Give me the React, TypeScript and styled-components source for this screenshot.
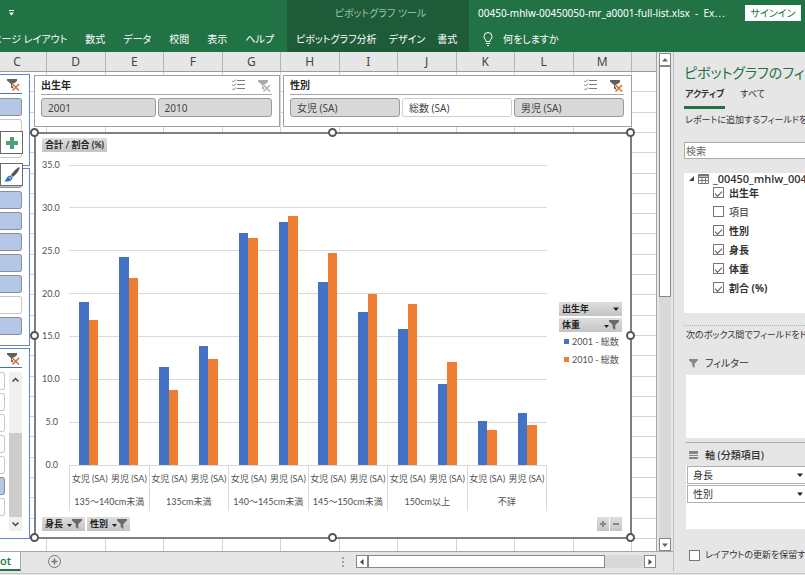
import React from "react";
import styled, { createGlobalStyle, css } from "styled-components";

const ui = `"Noto Sans", "Noto Sans CJK JP", sans-serif`;
const chartFont = `Lato, "Noto Sans CJK JP", sans-serif`;
const green = "#217346";

const GlobalStyle = createGlobalStyle`
  *, *::before, *::after { box-sizing: border-box; }
  body { margin: 0; background: #e6e6e6; }
  button, input { font: inherit; color: inherit; margin: 0; }
  button { padding: 0; background: none; border: 0; cursor: pointer; white-space: nowrap; }
  ul { list-style: none; margin: 0; padding: 0; }
  svg { display: block; flex: none; }
`;

const Window = styled.div`
  display: flex;
  flex-direction: column;
  height: 100vh;
  min-height: 560px;
  overflow: hidden;
  background: #e6e6e6;
  color: #262626;
  font: 10px/14px ${ui};
  font-feature-settings: "palt";
`;

/* Ribbon */
const Ribbon = styled.header`
  display: grid;
  grid-template-columns: 287px 182px minmax(0, 1fr);
  height: 52px;
  flex: none;
  background: ${green};
  color: #fff;
`;
const RibbonSection = styled.div<{ $dark?: boolean }>`
  display: grid;
  grid-template-rows: 26px 26px;
  min-width: 0;
  background: ${(p) => (p.$dark ? "#1e5c39" : green)};
`;
const TitleRow = styled.div<{ $center?: boolean }>`
  display: flex;
  align-items: center;
  justify-content: ${(p) => (p.$center ? "center" : "space-between")};
  padding: 0 4px 0 9px;
  color: ${(p) => (p.$center ? "#9fc2ae" : "#fff")};
  white-space: nowrap;
`;
const Tabs = styled.nav<{ $end?: boolean }>`
  display: flex;
  align-items: center;
  justify-content: ${(p) => (p.$end ? "flex-end" : "flex-start")};
  gap: ${(p) => (p.$end ? "18px" : "12px")};
  padding: 0 ${(p) => (p.$end ? "13px" : "8px")} 0 9px;
  overflow: hidden;
`;
const RibbonTab = styled.button`
  flex: none;
  line-height: 14px;
`;
const TellMe = styled.button`
  display: flex;
  align-items: center;
  gap: 10px;
  padding-left: 5px;
`;
const SignIn = styled.button`
  width: 56px;
  height: 16px;
  flex: none;
  background: #fff;
  color: ${green};
  line-height: 14px;
`;

/* Workbook */
const Body = styled.div`
  display: flex;
  flex: 1;
  min-height: 0;
`;
const Workbook = styled.main`
  display: flex;
  flex-direction: column;
  flex: 1;
  min-width: 0;
`;
const SheetRow = styled.div`
  display: flex;
  flex: 1;
  min-height: 0;
`;
const Sheet = styled.div`
  display: grid;
  grid-template-rows: 20px minmax(0, 1fr);
  flex: 1;
  min-width: 0;
  border-right: 1px solid #a6a6a6;
`;
const columns = css`
  display: grid;
  grid-template-columns: 47px repeat(10, minmax(0, 1fr)) 24px;
`;
const ColumnHeads = styled.div`
  ${columns}
  border-bottom: 1px solid #9c9c9c;
  background: #e6e6e6;
`;
const ColumnHead = styled.div<{ $cut?: boolean }>`
  padding-right: ${(p) => (p.$cut ? "12px" : "0")};
  border-right: 1px solid #b4b4b4;
  font-size: 12px;
  line-height: 19px;
  text-align: center;
  color: #444;
  &:last-child { border-right: 0; }
`;
const Cells = styled.div`
  display: grid;
  min-height: 0;
  background: #fff;
  > * { grid-area: 1 / 1; min-height: 0; min-width: 0; }
`;
const ColumnLines = styled.div`
  ${columns}
  > i { border-right: 1px solid #d4d4d4; }
  > i:last-child { border-right: 0; }
`;
const RowLines = styled.div`
  display: grid;
  grid-template-rows: repeat(23, minmax(0, 1fr)) 12px;
  > i { border-bottom: 1px solid #d4d4d4; }
  > i:last-child { border-bottom: 0; }
`;
const Objects = styled.div`
  display: flex;
  gap: 4px;
  padding: 2px 24px 12px 0;
`;

/* Slicers */
const SideSlicers = styled.div`
  display: flex;
  flex-direction: column;
  gap: 2px;
  width: 30px;
  flex: none;
`;
const SideSlicer = styled.section<{ $grow?: boolean; $height?: number }>`
  position: relative;
  display: flex;
  flex-direction: column;
  ${(p) => (p.$grow ? "flex: 1; min-height: 0;" : `flex: 0 0 ${p.$height}px;`)}
  padding-right: 7px;
  border: solid #5b86d0;
  border-width: 1px 1px 1px 0;
  background: #fff;
`;
const SideHead = styled.div`
  display: flex;
  justify-content: flex-end;
  align-items: center;
  height: 19px;
  flex: none;
  padding-right: 2px;
  border-bottom: 1px solid #4472c4;
`;
const SideItems = styled.div<{ $top: number }>`
  display: flex;
  flex-direction: column;
  gap: 3px;
  flex: 1;
  min-height: 0;
  padding-top: ${(p) => p.$top}px;
  overflow: hidden;
`;
const SideItem = styled.button<{ $on?: boolean }>`
  height: 18px;
  flex: none;
  border: 1px solid ${(p) => (p.$on ? "#8a8f9c" : "#c8c8c8")};
  border-left: 0;
  border-radius: 0 3px 3px 0;
  background: ${(p) => (p.$on ? "#b4c7e7" : "#fff")};
`;
const SideScroll = styled.div`
  display: flex;
  gap: 4px;
  flex: 1;
  min-height: 0;
  padding-bottom: 7px;
`;
const SideTrack = styled.div`
  display: flex;
  flex-direction: column;
  justify-content: space-between;
  width: 13px;
  flex: none;
  margin-top: 4px;
  background: #f0f0f0;
`;
const SideArrow = styled.button`
  display: grid;
  place-items: center;
  height: 14px;
`;
const SideThumb = styled.div`
  height: 84px;
  margin-top: auto;
  background: #cdcdcd;
`;
const FloatButton = styled.button<{ $top: number }>`
  position: absolute;
  left: 0;
  top: ${(p) => p.$top}px;
  display: grid;
  place-items: center;
  width: 23px;
  height: 23px;
  border: 1px solid #6b6b6b;
  background: #fff;
  z-index: 1;
`;
const Center = styled.div`
  display: flex;
  flex-direction: column;
  flex: 1;
  min-width: 0;
  gap: 5px;
  padding-top: 1px;
`;
const SlicerRow = styled.div`
  display: grid;
  grid-template-columns: minmax(0, 246fr) minmax(0, 349fr);
  gap: 3px;
`;
const Slicer = styled.section`
  height: 52px;
  padding: 0 7px 0 6px;
  border: 1px solid #a0a0a0;
  background: #fff;
`;
const SlicerHead = styled.div`
  display: flex;
  align-items: center;
  gap: 13px;
  height: 19px;
  padding-right: 1px;
  border-bottom: 1px solid #a6a6a6;
`;
const SlicerTitle = styled.h2`
  flex: 1;
  margin: 0;
  font-size: 10px;
  line-height: 14px;
  font-weight: 700;
`;
const SlicerItems = styled.div`
  display: grid;
  grid-auto-flow: column;
  grid-auto-columns: minmax(0, 1fr);
  gap: 2px;
  padding-top: 3px;
`;
const SlicerItem = styled.button<{ $off?: boolean }>`
  height: 19px;
  padding: 0 6px;
  border: 1px solid ${(p) => (p.$off ? "#d0d0d0" : "#9b9b9b")};
  border-radius: 3px;
  background: ${(p) => (p.$off ? "#fff" : "#d9d9d9")};
  color: #444;
  line-height: 14px;
  text-align: left;
`;

/* Chart */
const Chart = styled.section`
  position: relative;
  display: flex;
  flex-direction: column;
  flex: 1;
  min-height: 0;
  padding: 4px 8px 6px 6px;
  border: 2px solid #7f7f7f;
  background: #fff;
  font: 9px/12px ${chartFont};
  color: #505050;
`;
const HandleFrame = styled.div`
  position: absolute;
  inset: -1px;
  pointer-events: none;
`;
const Handle = styled.i<{ $x: number; $y: number }>`
  position: absolute;
  left: ${(p) => p.$x}%;
  top: ${(p) => p.$y}%;
  width: 9px;
  height: 9px;
  margin: -5px;
  border: 2px solid #555;
  border-radius: 50%;
  background: #fff;
`;
const FieldButton = styled.button<{ $spread?: boolean }>`
  display: flex;
  align-items: center;
  justify-content: ${(p) => (p.$spread ? "space-between" : "flex-start")};
  gap: 4px;
  height: 14px;
  padding: 0 3px;
  background: linear-gradient(#dedede, #c4c4c4);
  color: #222;
  font-weight: 700;
  line-height: 12px;
`;
const ChartRow = styled.div<{ $bottom?: boolean }>`
  display: flex;
  gap: 2px;
  flex: none;
  padding-top: ${(p) => (p.$bottom ? "6px" : "0")};
`;
const Zoomers = styled.div`
  display: flex;
  gap: 1px;
  margin-left: auto;
`;
const ZoomButton = styled.button`
  display: grid;
  place-items: center;
  width: 12px;
  height: 14px;
  background: linear-gradient(#dedede, #c4c4c4);
`;
const ChartBody = styled.div`
  display: grid;
  grid-template-columns: 27px minmax(0, 1fr) 75px;
  grid-template-rows: minmax(0, 1fr) 46px;
  flex: 1;
  min-height: 0;
  padding-top: 13px;
`;
const AxisValues = styled.div`
  display: flex;
  flex-direction: column;
  justify-content: space-between;
  margin: -6px 0;
  padding-right: 11px;
  text-align: right;
  white-space: nowrap;
`;
const Plot = styled.svg`
  width: 100%;
  height: 100%;
  overflow: visible;
`;
const Legend = styled.aside`
  display: flex;
  flex-direction: column;
  gap: 2px;
  justify-content: center;
  padding: 39px 0 0 12px;
`;
const LegendItem = styled.div<{ $color: string }>`
  display: flex;
  align-items: center;
  gap: 3px;
  height: 16px;
  padding-left: 5px;
  white-space: nowrap;
  &::before { content: ""; width: 5px; height: 5px; background: ${(p) => p.$color}; }
`;
const Categories = styled.div`
  grid-column: 2;
  display: grid;
  grid-template-columns: repeat(6, minmax(0, 1fr));
  border-left: 1px solid #d9d9d9;
`;
const Category = styled.div`
  display: grid;
  grid-template-columns: 1fr 1fr;
  grid-template-rows: 27px 19px;
  border-right: 1px solid #d9d9d9;
  text-align: center;
  white-space: nowrap;
  > span { display: flex; align-items: center; justify-content: center; min-width: 0; }
  > span:last-child { grid-column: 1 / 3; }
`;

/* Scroll bars and sheet tabs */
const VScroll = styled.div`
  display: flex;
  flex-direction: column;
  width: 16px;
  flex: none;
  padding: 1px 2px 0;
`;
const Track = styled.div<{ $row?: boolean }>`
  display: flex;
  flex-direction: ${(p) => (p.$row ? "row" : "column")};
  flex: 1;
  min-height: 0;
  min-width: 0;
  background: #d9d9d9;
`;
const Arrow = styled.button`
  display: grid;
  place-items: center;
  width: 12px;
  height: 13px;
  flex: none;
  border: 1px solid #888;
  background: #fff;
`;
const Thumb = styled.div<{ $size: number }>`
  flex: 0 0 ${(p) => p.$size}%;
  border: 1px solid #888;
  background: #fff;
`;
const BottomBar = styled.div`
  display: flex;
  align-items: center;
  height: 20px;
  flex: none;
  padding-right: 17px;
  border-top: 1px solid #a6a6a6;
`;
const SheetTab = styled.button`
  align-self: stretch;
  width: 21px;
  border-bottom: 2px solid ${green};
  border-right: 1px solid #a6a6a6;
  background: #fff;
  color: ${green};
  font: 600 11px/16px "Open Sans", sans-serif;
  text-align: left;
`;
const AddSheet = styled.button`
  margin-left: 27px;
`;
const HScroll = styled.div`
  display: flex;
  width: 300px;
  margin-left: 12px;
`;
const Dots = styled.span`
  display: flex;
  flex-direction: column;
  gap: 2px;
  margin-left: auto;
  > i { width: 2px; height: 2px; background: #a0a0a0; }
`;
const StatusEdge = styled.footer`
  height: 4px;
  flex: none;
  background: linear-gradient(#e6e6e6 2px, #c6c6c6 2px, #c6c6c6 3px, #e6e6e6 3px);
`;

/* Field list pane */
const Pane = styled.aside`
  display: flex;
  flex-direction: column;
  width: 132px;
  flex: none;
  padding-left: 10px;
  border-left: 1px solid #bdbdbd;
  overflow: hidden;
  white-space: nowrap;
  color: #333;
`;
const PaneTitle = styled.h1`
  margin: 10px 0 0;
  font-size: 14px;
  line-height: 22px;
  font-weight: 400;
  color: ${green};
`;
const PaneTabs = styled.div`
  display: flex;
  gap: 14px;
`;
const PaneTab = styled.button<{ $on?: boolean }>`
  height: 25px;
  padding: 0 1px 3px;
  border-bottom: 3px solid ${(p) => (p.$on ? green : "transparent")};
  font-size: 9px;
  font-weight: ${(p) => (p.$on ? 700 : 400)};
  line-height: 14px;
`;
const PaneText = styled.p<{ $dotted?: boolean }>`
  margin: ${(p) => (p.$dotted ? "12px 0 0" : "4px 0 0")};
  padding: ${(p) => (p.$dotted ? "2px 0 0 2px" : "0 0 0 1px")};
  border-top: ${(p) => (p.$dotted ? "1px dotted #b0b0b0" : "0")};
  font-size: 9px;
  line-height: 14px;
`;
const Search = styled.input`
  height: 17px;
  flex: none;
  margin-top: 15px;
  padding: 0 1px;
  border: 1px solid #ababab;
  border-right: 0;
  border-radius: 0;
  background: #fff;
  &::placeholder { color: #666; opacity: 1; }
`;
const FieldList = styled.div`
  height: 140px;
  flex: none;
  margin-top: 14px;
  background: #fff;
`;
const TableName = styled.div`
  display: flex;
  align-items: center;
  gap: 4px;
  height: 10px;
  padding: 1px 0 0 5px;
  font: 600 11px/10px "Open Sans", sans-serif;
`;
const Check = styled.label<{ $bold?: boolean; $footer?: boolean }>`
  display: flex;
  align-items: center;
  gap: 5px;
  height: ${(p) => (p.$footer ? "16px" : "19px")};
  padding-left: ${(p) => (p.$footer ? "5px" : "29px")};
  margin-top: ${(p) => (p.$footer ? "18px" : "0")};
  font-size: ${(p) => (p.$footer ? "9px" : "10px")};
  font-weight: ${(p) => (p.$bold ? 700 : 400)};
`;
const Box = styled.input`
  appearance: none;
  display: grid;
  place-items: center;
  width: 11px;
  height: 11px;
  flex: none;
  border: 1px solid #777;
  background: #fff;
  &:checked::after {
    content: "";
    width: 7px;
    height: 4px;
    border: solid #555;
    border-width: 0 0 1px 1px;
    transform: rotate(-45deg);
  }
`;
const AreaHead = styled.h3<{ $line?: boolean }>`
  display: flex;
  align-items: center;
  gap: 7px;
  height: 24px;
  flex: none;
  margin: ${(p) => (p.$line ? "4px 0 0 2px" : "9px 0 0 2px")};
  padding-left: 3px;
  border-top: ${(p) => (p.$line ? "1px solid #ababab" : "0")};
  font-size: 10px;
  line-height: 14px;
  font-weight: ${(p) => (p.$line ? 500 : 400)};
`;
const DropArea = styled.div`
  display: flex;
  flex-direction: column;
  gap: 1px;
  height: 63px;
  flex: none;
  margin-left: 2px;
  padding-left: 1px;
  background: #fff;
`;
const AreaField = styled.button`
  display: flex;
  align-items: center;
  justify-content: space-between;
  height: 18px;
  padding: 0 2px 0 5px;
  border: solid #b0b0b0;
  border-width: 1px 0 1px 1px;
  line-height: 14px;
`;

const FunnelClear = ({ muted }: { muted?: boolean }) => (
  <svg width="13" height="13" viewBox="0 0 13 13" aria-hidden="true">
    <path d="M0 1h10v2L6.5 6v5.5L4 9.5V6L0 2.500z" fill={muted ? "#ababab" : "#5f5f5f"} />
    <path d="M5.500 6l6.500 6.500M12 6l-6.500 6.500" stroke="#fff" strokeWidth="3" />
    <path d="M5.500 6l6.500 6.500M12 6l-6.500 6.500" stroke={muted ? "#b5b5b5" : "#e0692a"} strokeWidth="1.500" />
  </svg>
);
const Checklist = () => (
  <svg width="13" height="12" viewBox="0 0 13 12" fill="none" stroke="#7d7d7d" aria-hidden="true">
    <path d="M5 1.500h8M5 5.500h8M5 9.500h8M0 1.500l1.500 1.500L4 .5M0 5.500L1.500 7 4 4.500M0 9.500L1.500 11 4 8.500" />
  </svg>
);
const Funnel = ({ size = 10, color = "#6a6a6a" }: { size?: number; color?: string }) => (
  <svg width={size} height={size} viewBox="0 0 10 10" aria-hidden="true">
    <path d="M0 0h10v1.500L6.300 5v5L3.700 8V5L0 1.500z" fill={color} />
  </svg>
);
const Triangle = ({ d = "down", color = "#222" }: { d?: "up" | "down" | "left" | "right"; color?: string }) => {
  const paths = { down: "M0 1.500h6L3 5z", up: "M0 4.500h6L3 1z", left: "M4.500 0v6L1 3z", right: "M1.500 0v6L5 3z" };
  return (
    <svg width="6" height="6" viewBox="0 0 6 6" aria-hidden="true">
      <path d={paths[d]} fill={color} />
    </svg>
  );
};
const FilterMark = () => (
  <svg width="15" height="10" viewBox="0 0 15 10" aria-hidden="true">
    <path d="M0 5h5L2.500 8z" fill="#222" />
    <path d="M5 0h10v1.500L11.300 5v5L8.700 8V5L5 1.500z" fill="#6a6a6a" />
  </svg>
);
const Chevron = ({ up }: { up?: boolean }) => (
  <svg width="7" height="5" viewBox="0 0 7 5" fill="none" stroke="#444" strokeWidth="1.500" aria-hidden="true">
    <path d={up ? "M.5 4.500l3-3 3 3" : "M.5.5l3 3 3-3"} />
  </svg>
);

const data = [
  { name: "135〜140cm未満", values: [[19.0, 16.9], [24.3, 21.8]] },
  { name: "135cm未満", values: [[11.4, 8.8], [13.9, 12.4]] },
  { name: "140〜145cm未満", values: [[27.1, 26.5], [28.4, 29.0]] },
  { name: "145〜150cm未満", values: [[21.3, 24.7], [17.8, 20.0]] },
  { name: "150cm以上", values: [[15.9, 18.8], [9.5, 12.0]] },
  { name: "不詳", values: [[5.1, 4.1], [6.1, 4.7]] },
];
const bars = data.flatMap((g) => g.values);
const ticks = [35, 30, 25, 20, 15, 10, 5, 0];
const series = ["#4472c4", "#ed7d31"];
const fields = [
  { name: "出生年", on: true },
  { name: "項目", on: false },
  { name: "性別", on: true },
  { name: "身長", on: true },
  { name: "体重", on: true },
  { name: "割合 (%)", on: true },
];
const handles = [[0, 0], [50, 0], [100, 0], [0, 50], [100, 50], [0, 100], [50, 100], [100, 100]];

function PivotChart() {
  return (
    <Chart aria-label="ピボットグラフ">
      <ChartRow>
        <FieldButton>合計 / 割合 (%)</FieldButton>
      </ChartRow>
      <ChartBody>
        <AxisValues>
          {ticks.map((t) => <span key={t}>{t.toFixed(1)}</span>)}
        </AxisValues>
        <Plot viewBox="0 0 480 350" preserveAspectRatio="none" shapeRendering="crispEdges" role="img" aria-label="割合">
          {ticks.map((t) => (
            <path key={t} d={`M0 ${350 - t * 10}H480`} stroke="#d9d9d9" vectorEffect="non-scaling-stroke" />
          ))}
          {bars.map((pair, i) =>
            pair.map((v, s) => (
              <rect key={`${i}-${s}`} x={i * 40 + 10.5 + s * 9.5} y={350 - v * 10} width="9.5" height={v * 10} fill={series[s]} />
            ))
          )}
        </Plot>
        <Legend>
          <FieldButton $spread>出生年<Triangle /></FieldButton>
          <FieldButton $spread>体重<FilterMark /></FieldButton>
          <LegendItem $color={series[0]}>2001 - 総数</LegendItem>
          <LegendItem $color={series[1]}>2010 - 総数</LegendItem>
        </Legend>
        <Categories>
          {data.map((g) => (
            <Category key={g.name}>
              <span>女児 (SA)</span>
              <span>男児 (SA)</span>
              <span>{g.name}</span>
            </Category>
          ))}
        </Categories>
      </ChartBody>
      <ChartRow $bottom>
        <FieldButton>身長<FilterMark /></FieldButton>
        <FieldButton>性別<FilterMark /></FieldButton>
        <Zoomers>
          {["M1 4h6M4 1v6", "M1 4h6"].map((d, i) => (
            <ZoomButton key={d} aria-label={i ? "折りたたみ" : "展開"}>
              <svg width="8" height="8" viewBox="0 0 8 8" stroke="#888" strokeWidth="2"><path d={d} /></svg>
            </ZoomButton>
          ))}
        </Zoomers>
      </ChartRow>
      <HandleFrame>
        {handles.map(([x, y]) => <Handle key={`${x}-${y}`} $x={x} $y={y} />)}
      </HandleFrame>
    </Chart>
  );
}

function SlicerBox({ title, items }: { title: string; items: { label: string; off?: boolean }[] }) {
  const filtered = items.some((i) => i.off);
  return (
    <Slicer aria-label={title}>
      <SlicerHead>
        <SlicerTitle>{title}</SlicerTitle>
        <button aria-label="複数選択"><Checklist /></button>
        <button aria-label="フィルターのクリア"><FunnelClear muted={!filtered} /></button>
      </SlicerHead>
      <SlicerItems>
        {items.map((i) => <SlicerItem key={i.label} $off={i.off}>{i.label}</SlicerItem>)}
      </SlicerItems>
    </Slicer>
  );
}

function LeftSlicers() {
  return (
    <SideSlicers>
      <SideSlicer $height={92}>
        <SideHead><FunnelClear /></SideHead>
        <SideItems $top={4}>
          <SideItem $on aria-label="項目 1" />
          <SideItem aria-label="項目 2" />
          <SideItem aria-label="項目 3" />
        </SideItems>
        <FloatButton $top={56} aria-label="グラフ要素">
          <svg width="12" height="12" viewBox="0 0 12 12" stroke="#4f9f78" strokeWidth="4"><path d="M0 6h12M6 0v12" /></svg>
        </FloatButton>
      </SideSlicer>
      <SideSlicer $height={178}>
        <SideItems $top={1}>
          {[1, 1, 1, 1, 1, 1, 0, 1].map((on, i) => <SideItem key={i} $on={!!on} aria-label={`項目 ${i + 1}`} />)}
        </SideItems>
        <FloatButton $top={-6} aria-label="グラフ スタイル">
          <svg width="16" height="16" viewBox="0 0 16 16" aria-hidden="true">
            <path d="M15.500 0C16 3 12 7.500 9 10L7 8C9 5 12.500 1 15.500 0z" fill="#555" />
            <path d="M6.500 8.500l2 2C8.500 14 4 15 0 14.500 2.500 13.500 2 9 6.500 8.500z" fill="#2f75b5" />
            <path d="M5 10.500l2 1" stroke="#fff" />
          </svg>
        </FloatButton>
      </SideSlicer>
      <SideSlicer $grow>
        <SideHead><FunnelClear /></SideHead>
        <SideScroll>
          <SideItems $top={4}>
            {[0, 0, 0, 0, 0, 1, 0].map((on, i) => <SideItem key={i} $on={!!on} aria-label={`項目 ${i + 1}`} />)}
          </SideItems>
          <SideTrack>
            <SideArrow aria-label="上へ"><Chevron up /></SideArrow>
            <SideThumb />
            <SideArrow aria-label="下へ"><Chevron /></SideArrow>
          </SideTrack>
        </SideScroll>
      </SideSlicer>
    </SideSlicers>
  );
}

function FieldPane() {
  return (
    <Pane>
      <PaneTitle>ピボットグラフのフィールド</PaneTitle>
      <PaneTabs>
        <PaneTab $on>アクティブ</PaneTab>
        <PaneTab>すべて</PaneTab>
      </PaneTabs>
      <PaneText>レポートに追加するフィールドを選択</PaneText>
      <Search type="text" placeholder="検索" aria-label="検索" />
      <FieldList>
        <TableName>
          <svg width="5" height="5" viewBox="0 0 5 5" aria-hidden="true"><path d="M5 0v5H0z" fill="#444" /></svg>
          <svg width="11" height="10" viewBox="0 0 11 10" fill="none" stroke="#777" aria-hidden="true">
            <path d="M.5.5h10v9H.5zM.5 3.500h10M.5 6.500h10M4 3v7M7.500 3v7" />
            <path d="M0 1.500h11" strokeWidth="2" />
          </svg>
          _00450_mhlw_00450050
        </TableName>
        {fields.map((f) => (
          <Check key={f.name} $bold={f.on}>
            <Box type="checkbox" defaultChecked={f.on} />
            {f.name}
          </Check>
        ))}
      </FieldList>
      <PaneText $dotted>次のボックス間でフィールドをドラッグ</PaneText>
      <AreaHead><Funnel size={9} color="#888" />フィルター</AreaHead>
      <DropArea />
      <AreaHead $line>
        <svg width="9" height="8" viewBox="0 0 9 8" aria-hidden="true">
          <path d="M0 0h9v3H0zM0 4h9v1H0zM0 6h9v2H0z" fill="#888" />
        </svg>
        軸 (分類項目)
      </AreaHead>
      <DropArea>
        <AreaField>身長<Triangle /></AreaField>
        <AreaField>性別<Triangle /></AreaField>
      </DropArea>
      <Check $footer>
        <Box type="checkbox" />
        レイアウトの更新を保留する
      </Check>
    </Pane>
  );
}

export default function App() {
  return (
    <Window>
      <GlobalStyle />
      <Ribbon>
        <RibbonSection>
          <TitleRow>
            <button aria-label="クイック アクセス ツール バーのカスタマイズ">
              <svg width="5" height="6" viewBox="0 0 5 6" fill="#fff"><path d="M0 0h5v1H0zM0 2.500h5L2.500 5.500z" /></svg>
            </button>
          </TitleRow>
          <Tabs $end>
            {["ページ レイアウト", "数式", "データ", "校閲", "表示", "ヘルプ"].map((t) => <RibbonTab key={t}>{t}</RibbonTab>)}
          </Tabs>
        </RibbonSection>
        <RibbonSection $dark>
          <TitleRow $center>ピボットグラフ ツール</TitleRow>
          <Tabs>
            {["ピボットグラフ分析", "デザイン", "書式"].map((t) => <RibbonTab key={t}>{t}</RibbonTab>)}
          </Tabs>
        </RibbonSection>
        <RibbonSection>
          <TitleRow>
            <span>00450-mhlw-00450050-mr_a0001-full-list.xlsx&nbsp; - &nbsp;Ex⋯</span>
            <SignIn>サインイン</SignIn>
          </TitleRow>
          <Tabs>
            <TellMe>
              <svg width="10" height="14" viewBox="0 0 10 14" fill="none" stroke="#fff" aria-hidden="true">
                <path d="M3 9.500C3 7.500 1 7 1 4.500a4 4 0 0 1 8 0C9 7 7 7.500 7 9.500zM3 11.500h4M4 13.500h2" />
              </svg>
              何をしますか
            </TellMe>
          </Tabs>
        </RibbonSection>
      </Ribbon>
      <Body>
        <Workbook>
          <SheetRow>
            <Sheet>
              <ColumnHeads>
                {[..."CDEFGHIJKLM"].map((c, i) => <ColumnHead key={c} $cut={i === 0}>{c}</ColumnHead>)}
                <ColumnHead />
              </ColumnHeads>
              <Cells>
                <ColumnLines>{Array.from({ length: 12 }, (_, i) => <i key={i} />)}</ColumnLines>
                <RowLines>{Array.from({ length: 24 }, (_, i) => <i key={i} />)}</RowLines>
                <Objects>
                  <LeftSlicers />
                  <Center>
                    <SlicerRow>
                      <SlicerBox title="出生年" items={[{ label: "2001" }, { label: "2010" }]} />
                      <SlicerBox title="性別" items={[{ label: "女児 (SA)" }, { label: "総数 (SA)", off: true }, { label: "男児 (SA)" }]} />
                    </SlicerRow>
                    <PivotChart />
                  </Center>
                </Objects>
              </Cells>
            </Sheet>
            <VScroll>
              <Arrow aria-label="上へスクロール"><Triangle d="up" color="#666" /></Arrow>
              <Track><Thumb $size={49} /></Track>
              <Arrow aria-label="下へスクロール"><Triangle color="#666" /></Arrow>
            </VScroll>
          </SheetRow>
          <BottomBar>
            <SheetTab>ot</SheetTab>
            <AddSheet aria-label="新しいシート">
              <svg width="13" height="13" viewBox="0 0 13 13" fill="none" stroke="#777"><circle cx="6.500" cy="6.500" r="6" /><path d="M3.500 6.500h6M6.500 3.500v6" strokeWidth="1.500" /></svg>
            </AddSheet>
            <Dots><i /><i /><i /></Dots>
            <HScroll>
              <Arrow aria-label="左へスクロール"><Triangle d="left" color="#444" /></Arrow>
              <Track $row><Thumb $size={86} /></Track>
              <Arrow aria-label="右へスクロール"><Triangle d="right" color="#444" /></Arrow>
            </HScroll>
          </BottomBar>
        </Workbook>
        <FieldPane />
      </Body>
      <StatusEdge />
    </Window>
  );
}
